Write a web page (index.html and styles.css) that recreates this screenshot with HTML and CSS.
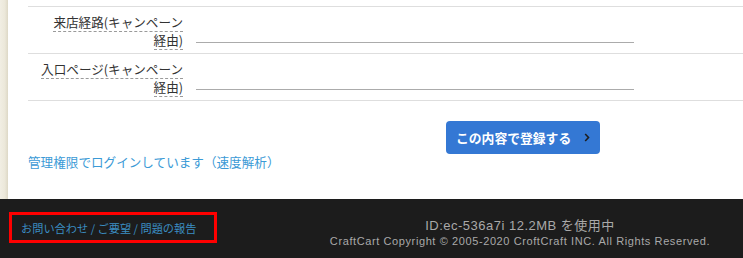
FILE: index.html
```html
<!DOCTYPE html>
<html lang="ja">
<head>
<meta charset="utf-8">
<title>登録</title>
<link rel="stylesheet" href="styles.css">
</head>
<body>
<div class="page">
  <div class="side"></div>
  <div class="main">
    <div class="form">
      <div class="prev"></div>
      <div class="row">
        <div class="label"><span class="hint">来店経路(キャンペーン<br>経由)</span></div>
        <div class="field"></div>
      </div>
      <div class="row">
        <div class="label"><span class="hint">入口ページ(キャンペーン<br>経由)</span></div>
        <div class="field"></div>
      </div>
    </div>
    <div class="actions">
      <button class="submit" type="button">この内容で登録する
        <svg class="chev" width="6" height="9" viewBox="0 0 6 9"><path d="M1.2 1 L4.5 4.5 L1.2 8" fill="none" stroke="#1e1e1e" stroke-width="1.6"/></svg>
      </button>
    </div>
    <a class="admin" href="#">管理権限でログインしています（速度解析）</a>
  </div>
</div>
<footer class="footer">
  <div class="contact"><a href="#">お問い合わせ / ご要望 / 問題の報告</a></div>
  <div class="info">
    <div class="usage">ID:ec-536a7i 12.2MB を使用中</div>
    <div class="copy">CraftCart Copyright © 2005-2020 CroftCraft INC. All Rights Reserved.</div>
  </div>
</footer>
</body>
</html>
```
FILE: styles.css
```css
html, body {
  margin: 0;
  padding: 0;
}
body {
  font-family: "Noto Sans CJK JP", "Noto Sans", sans-serif;
  font-size: 12.6px;
  color: #333;
  background: #1c1c1c;
  width: 743px;
  height: 258px;
  overflow: hidden;
}
.page {
  display: flex;
  height: 199px;
  background: #fff;
}
.side {
  width: 8px;
  flex: none;
  background: linear-gradient(to right, #f1eee3 0%, #ece8da 60%, #ddd8c6 100%);
}
.main {
  flex: 1;
  display: flex;
  flex-direction: column;
}
.form {
  margin-left: 20px;
}
.prev {
  height: 6px;
  border-bottom: 1px solid #dedede;
}
.row {
  display: flex;
  padding: 6px 0 4px;
  border-bottom: 1px solid #dedede;
}
.label {
  width: 155px;
  flex: none;
  text-align: right;
  line-height: 18px;
  height: 36px;
  color: #333;
}
.hint {
  border-bottom: 1px dashed #9a9a9a;
}
.field {
  width: 438px;
  height: 28px;
  margin-left: 13px;
  margin-top: 1px;
  border-bottom: 1px solid #ababab;
}
.actions {
  display: flex;
  padding-left: 438px;
  margin-top: 20px;
}
.submit {
  width: 154px;
  height: 33px;
  border: 0;
  border-radius: 4px;
  background: #3478d4;
  color: #fff;
  font-family: inherit;
  font-size: 12.8px;
  font-weight: bold;
  display: flex;
  align-items: center;
  padding: 0 0 0 10px;
  gap: 13px;
}
.chev {
  display: block;
}
.admin {
  margin: 0 0 0 20px;
  line-height: 16px;
  color: #3b9ad6;
  text-decoration: none;
  align-self: flex-start;
}
.footer {
  display: flex;
  align-items: flex-start;
  background: #1c1c1c;
  height: 59px;
}
.contact {
  margin: 13px 0 0 9px;
  height: 25px;
  border: 3px solid #ff0000;
  display: flex;
  align-items: center;
  padding-left: 9px;
  width: 193px;
}
.contact a {
  color: #3b8ec2;
  font-size: 11.2px;
  text-decoration: none;
  line-height: 14px;
}
.info {
  margin-left: auto;
  width: 446px;
  text-align: center;
  color: #a9a9a9;
  padding-top: 18px;
  font-family: "Liberation Sans", "Noto Sans CJK JP", sans-serif;
}
.usage {
  font-size: 13px;
  line-height: 17px;
  letter-spacing: 0.5px;
}
.copy {
  font-size: 11px;
  line-height: 15px;
  letter-spacing: 0.6px;
}
```
